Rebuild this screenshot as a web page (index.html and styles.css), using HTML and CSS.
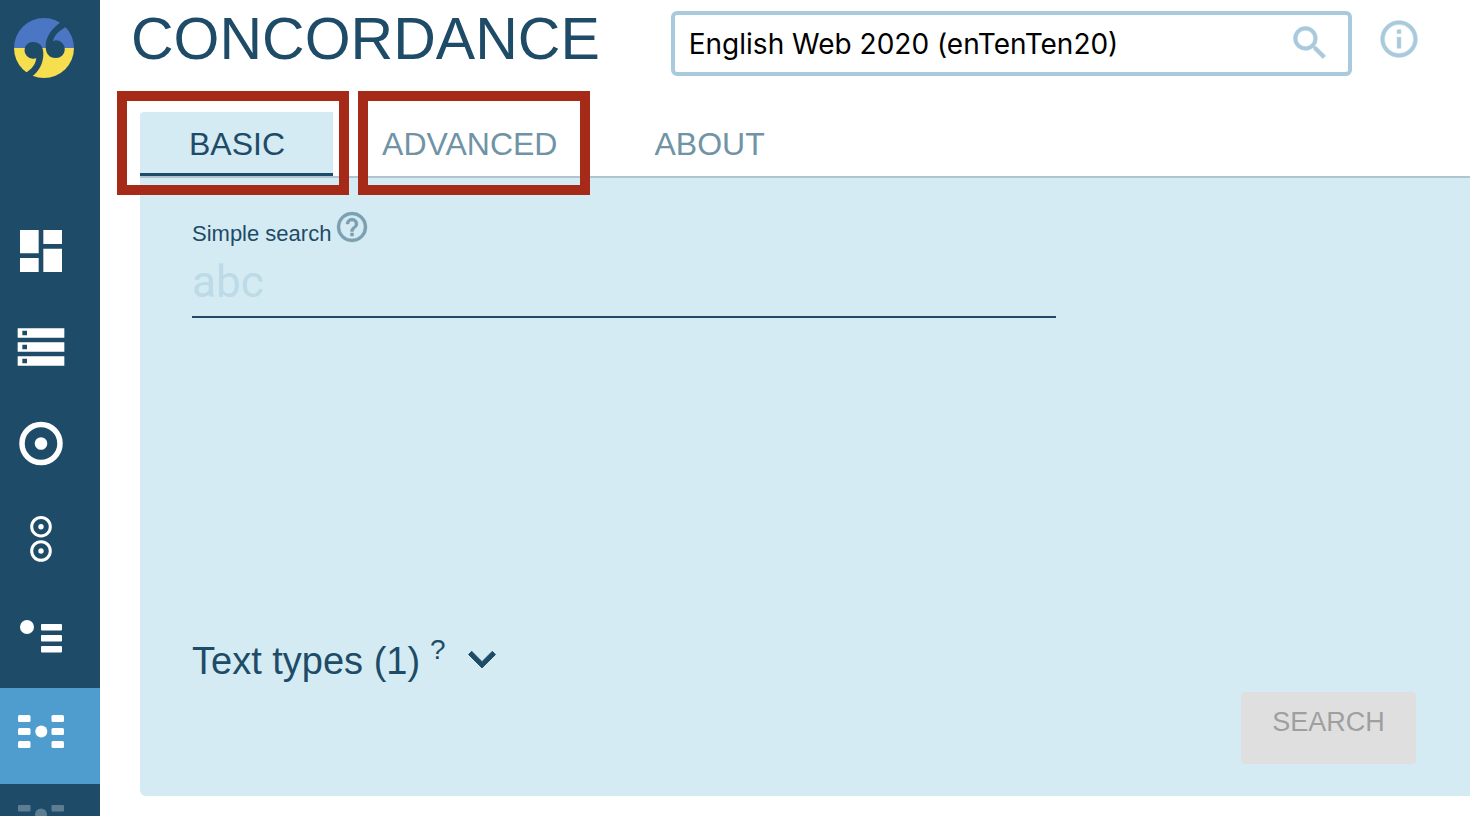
FILE: index.html
```html
<!DOCTYPE html>
<html lang="en">
<head>
<meta charset="utf-8">
<title>Concordance</title>
<link rel="stylesheet" href="styles.css">
</head>
<body>
<div class="app">
  <nav class="sidebar" aria-label="Main">
    <a class="logo" href="#" aria-label="Home">
      <svg class="logo-mark" viewBox="42 53 180 180">
        <path fill="#4b76c4" d="M42 143a90 90 0 0 1 180 0z"/>
        <path fill="#f5df4f" d="M42 143a90 90 0 0 0 180 0z"/>
        <g fill="#1e4b67">
          <path d="M99 125C119 125 130 138 130 160C130 188 118 212 94 230L76 218C96 206 107 192 109 173C106 175 102 175 98 175A25 25 0 0 1 99 125Z"/>
          <path d="M167 173C147 173 137 160 137 138C137 108 156 84 184 64L202 77C178 90 162 105 159 123C162 121 166 120 169 120A26.500 26.500 0 0 1 167 173Z"/>
        </g>
      </svg>
    </a>
    <a class="nav-item" href="#" aria-label="Dashboard">
      <svg class="nav-icon" viewBox="0 0 24 24"><path d="M3 13h8V3H3zm0 8h8v-6H3zm10 0h8V11h-8zm0-18v6h8V3z"/></svg>
    </a>
    <a class="nav-item" href="#" aria-label="Select corpus">
      <svg class="nav-icon" viewBox="0 0 24 24"><path d="M2 20h20v-4H2zm2-3h2v2H4zM2 4v4h20V4zm4 3H4V5h2zm-4 7h20v-4H2zm2-3h2v2H4z"/></svg>
    </a>
    <a class="nav-item" href="#" aria-label="Word sketch">
      <svg class="nav-icon" viewBox="0 0 56 56"><circle cx="28" cy="28.500" r="19" fill="none" stroke="#fff" stroke-width="5.500"/><circle cx="28" cy="28.500" r="6.300"/></svg>
    </a>
    <a class="nav-item" href="#" aria-label="Word sketch difference">
      <svg class="nav-icon" viewBox="0 0 56 56"><g fill="none" stroke="#fff" stroke-width="3"><circle cx="28" cy="15.700" r="9.300"/><circle cx="28" cy="40" r="9.300"/></g><circle cx="28" cy="15.700" r="2.700"/><circle cx="28" cy="40" r="2.700"/></svg>
    </a>
    <a class="nav-item" href="#" aria-label="Thesaurus">
      <svg class="nav-icon" viewBox="0 0 56 56"><circle cx="14" cy="20" r="7"/><rect x="28" y="17" width="21" height="6.500" rx="1"/><rect x="28" y="28" width="21" height="6.500" rx="1"/><rect x="28" y="39" width="21" height="6.500" rx="1"/></svg>
    </a>
    <a class="nav-item active" href="#" aria-label="Concordance" aria-current="page">
      <svg class="nav-icon" viewBox="0 0 56 56"><rect x="5" y="12" width="12.500" height="7" rx="1.500"/><rect x="5" y="25" width="12.500" height="7" rx="1.500"/><rect x="5" y="38" width="12.500" height="7" rx="1.500"/><rect x="38.500" y="12" width="12.500" height="7" rx="1.500"/><rect x="38.500" y="25" width="12.500" height="7" rx="1.500"/><rect x="38.500" y="38" width="12.500" height="7" rx="1.500"/><circle cx="28.300" cy="28.500" r="6"/></svg>
    </a>
    <a class="nav-item dimmed" href="#" aria-label="Parallel concordance">
      <svg class="nav-icon" viewBox="0 0 56 56"><rect x="5" y="6" width="12.500" height="6.500" rx="1"/><rect x="38.500" y="6" width="12.500" height="6.500" rx="1"/><circle cx="28" cy="15.500" r="6"/></svg>
    </a>
  </nav>
  <main class="main">
    <header class="header">
      <h1 class="title">CONCORDANCE</h1>
      <div class="corpus">
        <input class="corpus-input" type="text" aria-label="Corpus" value="English Web 2020 (enTenTen20)">
        <button class="icon-button" type="button" aria-label="Find corpus">
          <svg class="icon" viewBox="0 0 24 24"><path d="M15.500 14h-.79l-.28-.27A6.470 6.470 0 0 0 16 9.500 6.500 6.500 0 1 0 9.500 16c1.610 0 3.090-.59 4.230-1.570l.27.28v.79l5 4.990L20.490 19zm-6 0a4.500 4.500 0 1 1 0-9 4.500 4.500 0 0 1 0 9z"/></svg>
        </button>
      </div>
      <button class="icon-button info" type="button" aria-label="Corpus info">
        <svg class="icon" viewBox="0 0 24 24"><path d="M11 17h2v-6h-2zm1-15a10 10 0 1 0 0 20 10 10 0 0 0 0-20zm0 18a8 8 0 1 1 0-16 8 8 0 0 1 0 16zM11 9h2V7h-2z"/></svg>
      </button>
    </header>
    <div class="tabs" role="tablist">
      <button class="tab selected" type="button" role="tab" aria-selected="true">BASIC<span class="marker marker-basic"></span></button>
      <button class="tab" type="button" role="tab" aria-selected="false">ADVANCED<span class="marker marker-advanced"></span></button>
      <button class="tab" type="button" role="tab" aria-selected="false">ABOUT</button>
    </div>
    <form class="panel">
      <div class="field">
        <div class="field-head">
          <label class="field-label" for="query">Simple search</label>
          <svg class="help" viewBox="0 0 24 24"><path d="M11 18h2v-2h-2zm1-16a10 10 0 1 0 0 20 10 10 0 0 0 0-20zm0 18a8 8 0 1 1 0-16 8 8 0 0 1 0 16zm0-14a4 4 0 0 0-4 4h2a2 2 0 1 1 4 0c0 2-3 1.750-3 5h2c0-2.250 3-2.500 3-5a4 4 0 0 0-4-4z"/></svg>
        </div>
        <input class="query" id="query" type="text" placeholder="abc">
      </div>
      <div class="footer">
        <button class="text-types" type="button" aria-expanded="false">
          <span>Text types (1)</span>
          <span class="hint">?</span>
          <svg class="chevron" viewBox="0 0 24 24"><path d="M7.410 7.700 12 12.280l4.590-4.580L18 9.110l-6 6-6-6z"/></svg>
        </button>
        <button class="search" type="submit" disabled>SEARCH</button>
      </div>
    </form>
  </main>
</div>
</body>
</html>
```
FILE: styles.css
```css
* {
  box-sizing: border-box;
}

body {
  margin: 0;
  background: #fff;
  color: #1e4b67;
  font-family: "Liberation Sans", Arial, sans-serif;
}

button {
  margin: 0;
  padding: 0;
  border: 0;
  background: none;
  color: inherit;
  font: inherit;
}

svg {
  display: block;
  flex: none;
}

.app {
  display: flex;
  height: 100vh;
  overflow: hidden;
}

.sidebar {
  flex: none;
  width: 100px;
  overflow: hidden;
  background: #1e4b67;
}

.logo {
  display: block;
  height: 208px;
  padding: 18px 14px;
}

.logo-mark {
  width: 60px;
  height: 60px;
}

.nav-item {
  display: block;
  height: 96px;
  padding: 15px 13px;
}

.nav-icon {
  width: 56px;
  height: 56px;
  fill: #fff;
}

.active {
  background: #4f9dcf;
}

.dimmed .nav-icon {
  opacity: 0.28;
}

.main {
  display: flex;
  flex: 1;
  flex-direction: column;
  min-width: 0;
  padding: 0 0 20px 40px;
}

.header {
  display: flex;
  align-items: flex-start;
  height: 112px;
  margin-left: -9px;
  padding-right: 49px;
}

.title {
  margin: 5px 71px 0 0;
  font-size: 59px;
  font-weight: 400;
  line-height: 68px;
}

.corpus {
  display: flex;
  flex: 1;
  align-items: center;
  height: 65px;
  margin: 11px 25px 0 0;
  padding: 0 16px 2px 14px;
  border: 4px solid #a9cadd;
  border-radius: 6px;
}

.corpus-input {
  flex: 1;
  min-width: 0;
  padding: 2px 0 0;
  border: 0;
  outline: 0;
  background: none;
  color: #000;
  font-family: Inter, sans-serif;
  font-size: 28px;
}

.icon-button {
  color: #a9cadd;
}

.icon {
  width: 44px;
  height: 44px;
  fill: currentColor;
  stroke: currentColor;
  stroke-width: 0.3;
}

.info {
  margin-top: 17px;
}

.tabs {
  display: flex;
  border-bottom: 2px solid #b0c5d0;
}

.tab {
  position: relative;
  height: 64px;
  padding: 0 48px 0 49px;
  color: #7093a5;
  font-size: 32px;
  line-height: 64px;
}

.selected {
  border-radius: 4px 0 0 0;
  background: #d4ebf3;
  box-shadow: inset 0 -3px #1e4b67;
  color: #1e4b67;
}

.marker {
  position: absolute;
  z-index: 1;
  top: -21px;
  width: 232px;
  height: 104px;
  border: 10px solid #a52a17;
  pointer-events: none;
}

.marker-basic {
  left: -23px;
}

.marker-advanced {
  left: 25px;
}

.panel {
  display: flex;
  flex: 1;
  flex-direction: column;
  justify-content: space-between;
  padding: 31px 54px 32px 52px;
  border-radius: 0 0 0 6px;
  background: #d4ebf3;
}

.field {
  max-width: 864px;
}

.field-head {
  display: flex;
  gap: 3px;
}

.field-label {
  padding-top: 12px;
  font-size: 22px;
  line-height: 26px;
}

.help {
  width: 36px;
  height: 36px;
  fill: #7a9fb0;
  stroke: #7a9fb0;
  stroke-width: 0.3;
}

.query {
  display: block;
  width: 100%;
  height: 71px;
  padding: 0;
  border: 0;
  border-bottom: 2px solid #1e4b67;
  outline: 0;
  background: none;
  color: #1e4b67;
  font-family: Roboto, sans-serif;
  font-size: 44px;
}

.query::placeholder {
  color: #bddae7;
  opacity: 1;
}

.footer {
  display: flex;
  align-items: flex-end;
  justify-content: space-between;
}

.text-types {
  display: flex;
  align-items: center;
  margin-bottom: 76px;
  font-size: 38px;
}

.hint {
  padding: 0 9px 22px 10px;
  font-size: 28px;
  line-height: 32px;
}

.search {
  width: 175px;
  height: 72px;
  padding-bottom: 12px;
  border-radius: 4px;
  background: #dfdfdf;
  color: #9f9f9f;
  font-size: 27px;
}

.chevron {
  width: 54px;
  height: 54px;
  fill: currentColor;
  stroke: currentColor;
  stroke-width: 0.4;
}
```
